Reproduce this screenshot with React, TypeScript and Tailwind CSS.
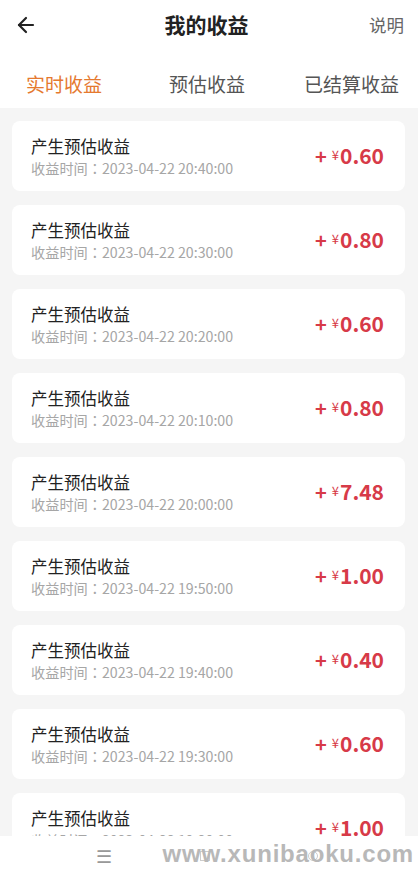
import { ArrowLeft } from "lucide-react";

const records = [
  { time: "2023-04-22 20:40:00", amount: "0.60" },
  { time: "2023-04-22 20:30:00", amount: "0.80" },
  { time: "2023-04-22 20:20:00", amount: "0.60" },
  { time: "2023-04-22 20:10:00", amount: "0.80" },
  { time: "2023-04-22 20:00:00", amount: "7.48" },
  { time: "2023-04-22 19:50:00", amount: "1.00" },
  { time: "2023-04-22 19:40:00", amount: "0.40" },
  { time: "2023-04-22 19:30:00", amount: "0.60" },
  { time: "2023-04-22 19:20:00", amount: "1.00" },
];

const font = { fontFamily: '"Noto Sans CJK SC", "Noto Sans", sans-serif' };

export default function App() {
  return (
    <div className="h-[874px] w-full flex flex-col bg-[#f5f5f5] overflow-hidden" style={font}>
      {/* Header */}
      <div className="bg-white h-[50px] flex items-center justify-between px-[14px] shrink-0">
        <ArrowLeft className="w-[24px] h-[24px] text-[#222]" strokeWidth={2.2} />
        <h1 className="text-[21px] font-bold text-[#222] ml-[6px]">我的收益</h1>
        <span className="text-[17.5px] text-[#666]">说明</span>
      </div>

      {/* Tabs */}
      <div className="bg-white h-[58px] pt-[10px] flex items-center justify-between pl-[26px] pr-[19px] shrink-0 text-[19px]">
        <span className="text-[#e5792f]">实时收益</span>
        <span className="text-[#555] ml-[8px]">预估收益</span>
        <span className="text-[#555]">已结算收益</span>
      </div>

      {/* List */}
      <div className="flex-1 overflow-hidden px-[12px] pt-[13px] pr-[13px] flex flex-col gap-[14px]">
        {records.map((r, i) => (
          <div key={i} className="bg-white rounded-[8px] h-[70px] shrink-0 flex items-center justify-between pl-[19px] pr-[21px]">
            <div className="flex flex-col">
              <span className="text-[16.5px] leading-[22px] text-[#222]">产生预估收益</span>
              <span className="text-[14.2px] leading-[20px] text-[#a6a6a6] mt-[1px]">
                收益时间
                <span style={{ fontFamily: '"Noto Sans CJK TC", sans-serif' }}>：</span>
                {r.time}
              </span>
            </div>
            <div className="flex items-baseline text-[#d73a48] font-bold">
              <span className="text-[20px]">+</span>
              <span className="text-[13px] font-normal ml-[5px] relative -top-[4px]">¥</span>
              <span className="text-[21px] ml-[1px]">{r.amount}</span>
            </div>
          </div>
        ))}
      </div>

      {/* Bottom nav */}
      <div className="bg-white h-[38px] shrink-0 relative flex items-center">
        <span className="absolute left-[96px] top-[10px] text-[18px] leading-none text-[#999]">☰</span>
        <span className="absolute left-[200px] top-[15px] w-[10px] h-[10px] border border-[#ccc]" />
        <span className="absolute left-[308px] top-[15px] w-[10px] h-[10px] rounded-full border border-[#ccc]" />
        <span
          className="absolute right-[4px] top-[6px] text-[24px] leading-none font-bold text-[#b8b8b8] tracking-[0.8px]"
          style={{ fontFamily: '"Liberation Sans", Arial, sans-serif' }}
        >
          www.xunibaoku.com
        </span>
      </div>
    </div>
  );
}
